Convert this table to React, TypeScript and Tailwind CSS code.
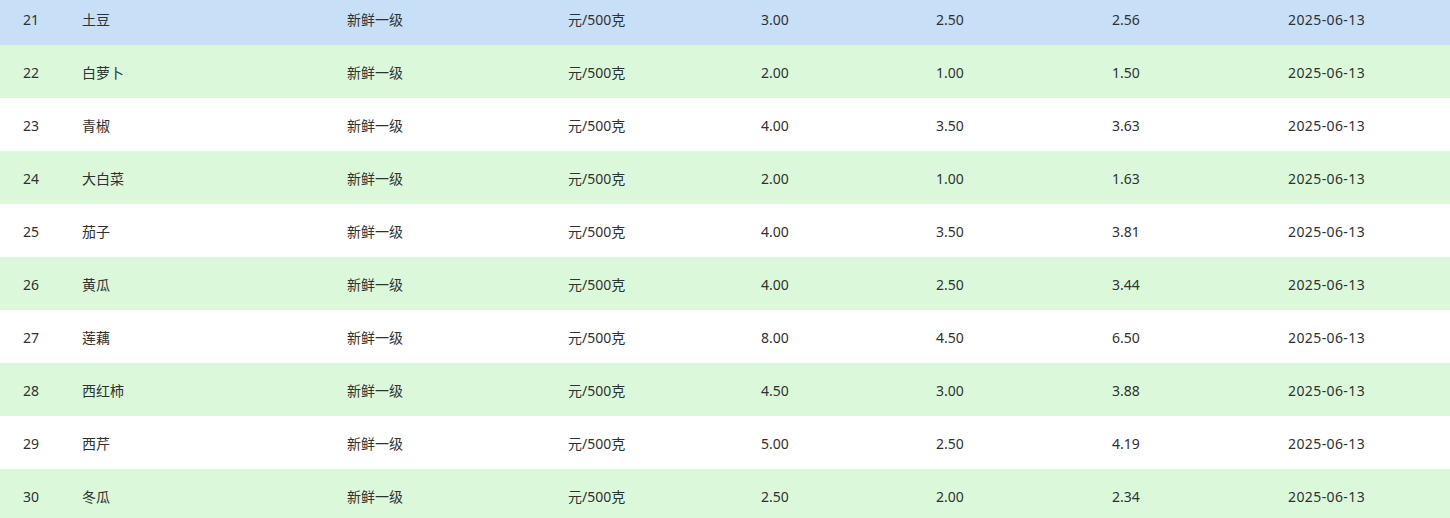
import React from "react";

const rows: [string, string, string, string, string][] = [
  ["21", "土豆", "3.00", "2.50", "2.56"],
  ["22", "白萝卜", "2.00", "1.00", "1.50"],
  ["23", "青椒", "4.00", "3.50", "3.63"],
  ["24", "大白菜", "2.00", "1.00", "1.63"],
  ["25", "茄子", "4.00", "3.50", "3.81"],
  ["26", "黄瓜", "4.00", "2.50", "3.44"],
  ["27", "莲藕", "8.00", "4.50", "6.50"],
  ["28", "西红柿", "4.50", "3.00", "3.88"],
  ["29", "西芹", "5.00", "2.50", "4.19"],
  ["30", "冬瓜", "2.50", "2.00", "2.34"],
];

export default function App() {
  return (
    <div
      className="w-[1450px] h-[518px] overflow-hidden bg-white text-[14px] text-[#303133]"
      style={{ fontFamily: '"Noto Sans", "Noto Sans CJK SC", sans-serif' }}
    >
      <div className="-mt-[8px] flex flex-col">
        {rows.map((r, i) => {
          const bg = i === 0 ? "bg-[#c8dff8]" : i % 2 === 1 ? "bg-[#dbf9da]" : "bg-white";
          return (
            <div
              key={r[0]}
              className={`grid grid-cols-[72px_265px_221px_193px_175px_176px_176px_1fr] h-[53px] pt-[2px] items-center ${bg}`}
            >
              <div className="pl-[23px]">{r[0]}</div>
              <div className="pl-[10px]">{r[1]}</div>
              <div className="pl-[10px]">新鲜一级</div>
              <div className="pl-[10px]">元/500克</div>
              <div className="pl-[10px]">{r[2]}</div>
              <div className="pl-[10px]">{r[3]}</div>
              <div className="pl-[10px]">{r[4]}</div>
              <div className="pl-[10px] tracking-[0.4px]">2025-06-13</div>
            </div>
          );
        })}
      </div>
    </div>
  );
}
